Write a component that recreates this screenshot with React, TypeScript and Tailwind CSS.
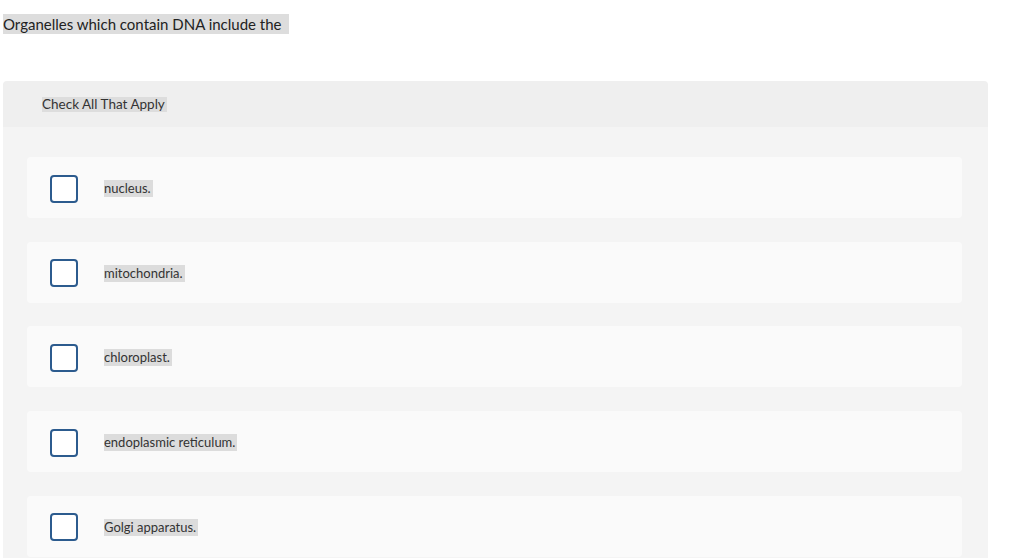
const options = [
  "nucleus.",
  "mitochondria.",
  "chloroplast.",
  "endoplasmic reticulum.",
  "Golgi apparatus.",
];

function Option({ label }: { label: string }) {
  return (
    <div className="flex h-[61px] items-center rounded bg-[#fafafa] pl-[23px] pt-[2px]">
      <div className="h-[28px] w-[28px] shrink-0 rounded-[4px] border-2 border-[#2c5b8e] bg-white"></div>
      <span className="ml-[26px] bg-[#dcdcdc] pr-[2px] text-[13px] leading-[17px] text-[#333]">{label}</span>
    </div>
  );
}

export default function App() {
  return (
    <div className="min-h-screen bg-white font-['Lato','Liberation_Sans',sans-serif] text-[#222]">
      <div className="flex px-[3px] pt-[14px]">
        <span className="bg-[#dddddd] pr-[7px] text-[15px] leading-[20px]">Organelles which contain DNA include the</span>
      </div>
      <div className="mx-[3px] mt-[47px] w-[985px] rounded-t">
        <div className="flex h-[46px] items-center rounded-t bg-[#efefef] pl-[39px] pt-[1px]">
          <span className="bg-[#dddddd] pr-[2px] text-[13.5px] leading-[15px] text-[#333]">Check All That Apply</span>
        </div>
        <div className="flex flex-col gap-[23.7px] bg-[#f4f4f4] pb-[20px] pl-[24px] pr-[26px] pt-[30px]">
          {options.map((o) => (
            <Option key={o} label={o} />
          ))}
        </div>
      </div>
    </div>
  );
}
